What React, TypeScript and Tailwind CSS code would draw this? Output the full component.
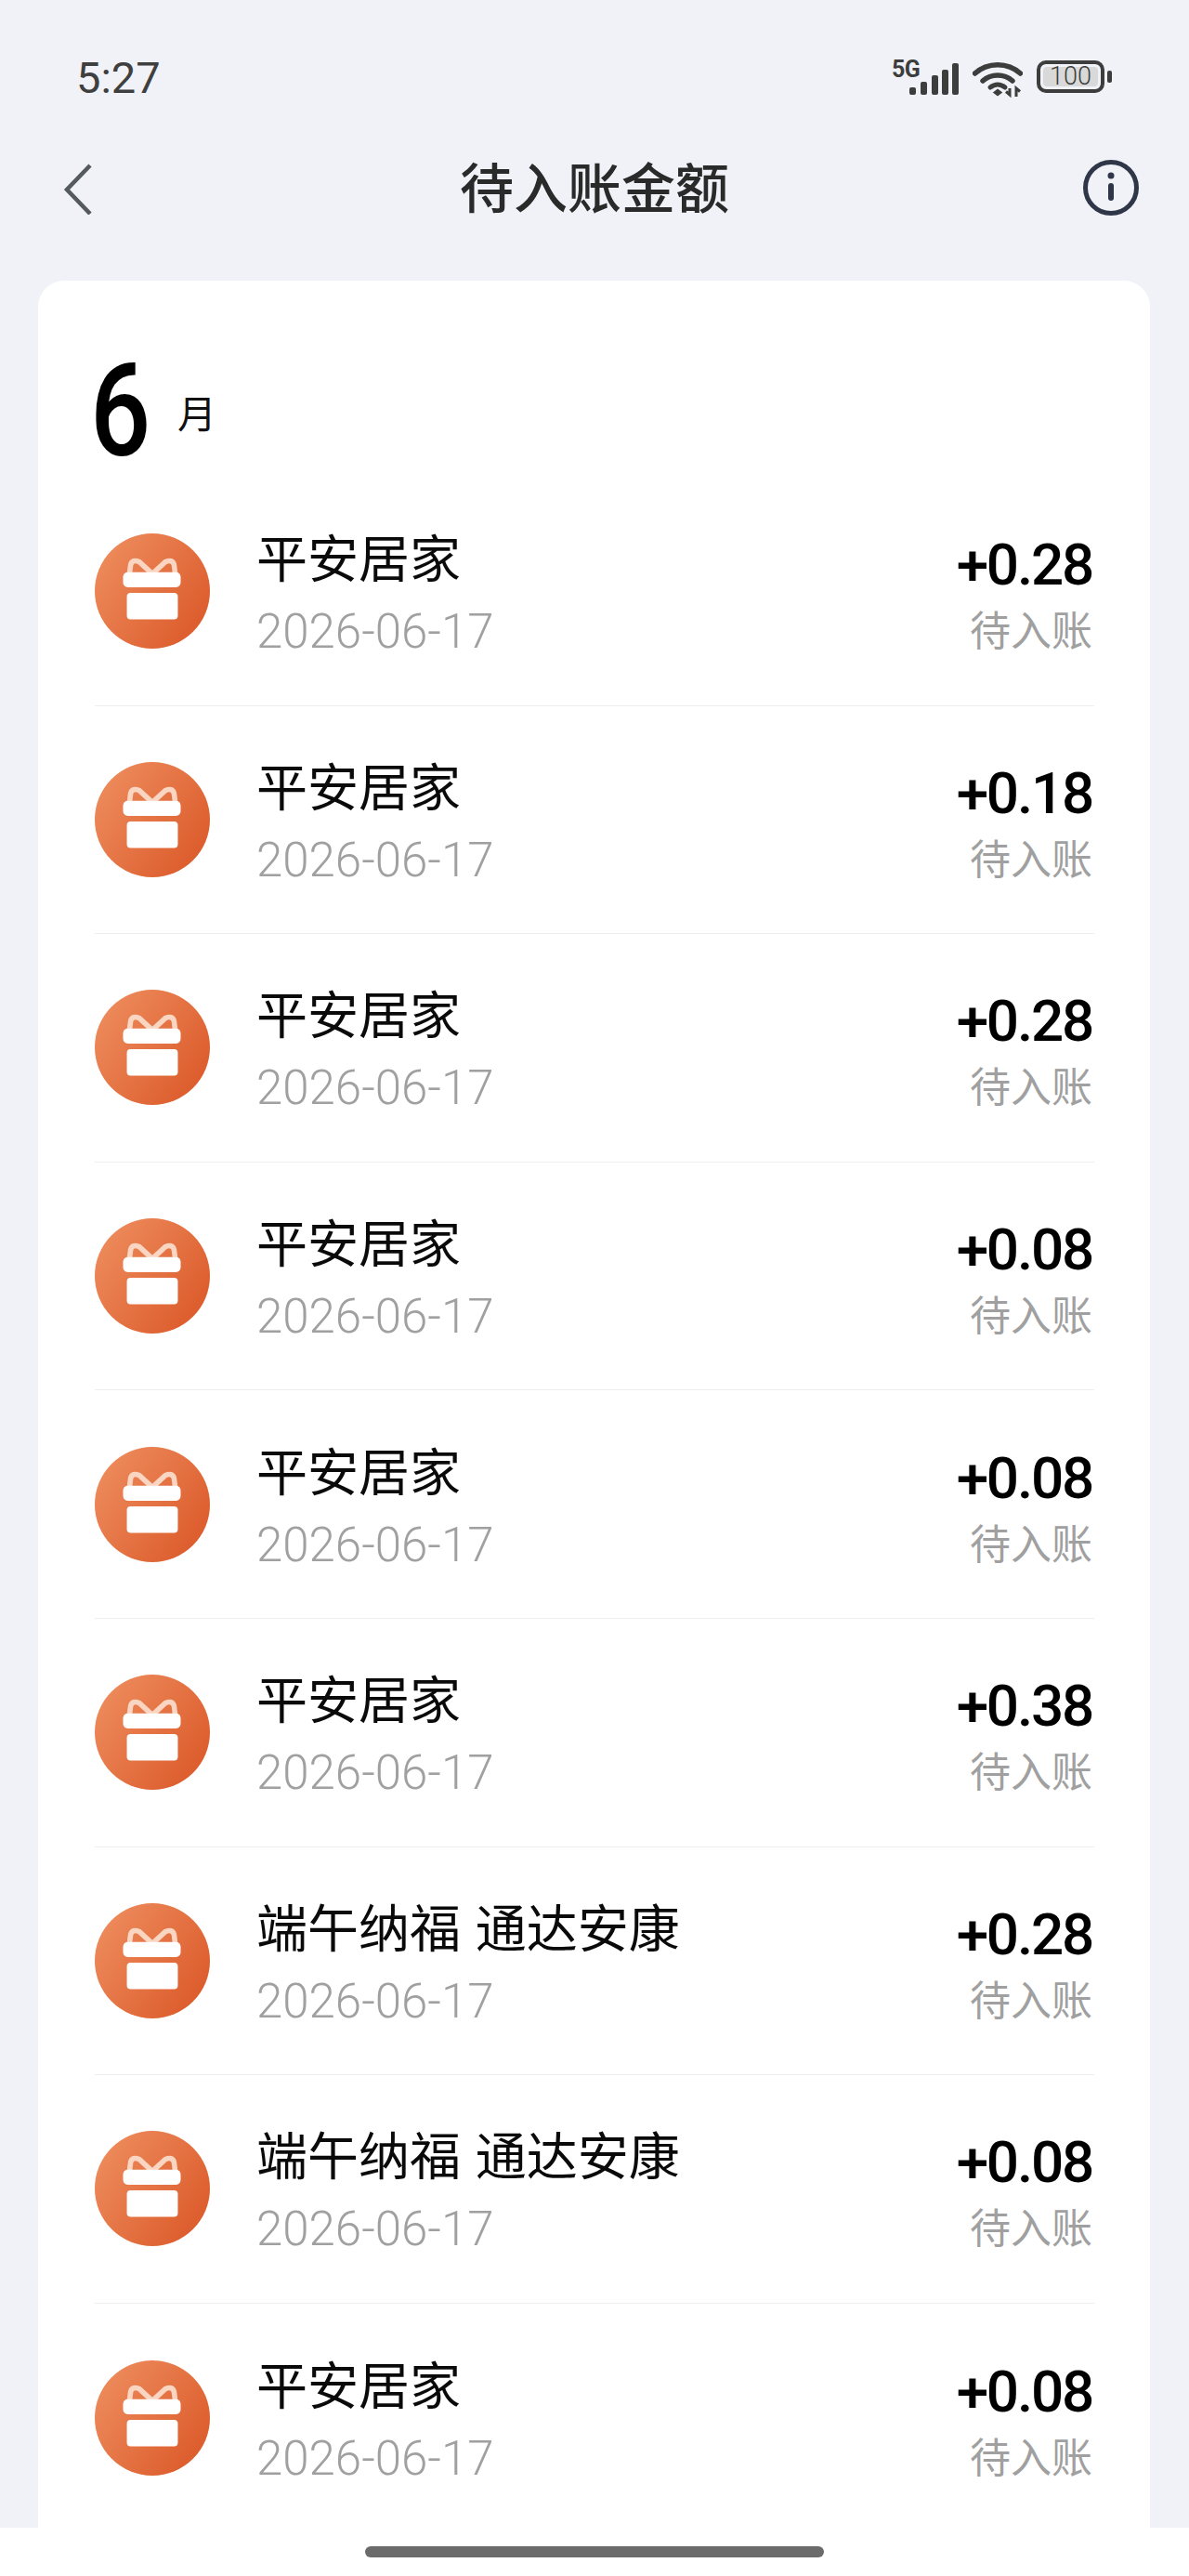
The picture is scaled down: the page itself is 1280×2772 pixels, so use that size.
import React from 'react';

const rows = [
  { title: '平安居家', amount: '+0.28' },
  { title: '平安居家', amount: '+0.18' },
  { title: '平安居家', amount: '+0.28' },
  { title: '平安居家', amount: '+0.08' },
  { title: '平安居家', amount: '+0.08' },
  { title: '平安居家', amount: '+0.38' },
  { title: '端午纳福 通达安康', amount: '+0.28' },
  { title: '端午纳福 通达安康', amount: '+0.08' },
  { title: '平安居家', amount: '+0.08' },
];

const GiftIcon = () => (
  <svg viewBox="0 0 122 122" className="w-[124px] h-[124px] shrink-0">
    <defs>
      <linearGradient id="giftBg" x1="0" y1="0.15" x2="1" y2="0.85">
        <stop offset="0" stopColor="#ee8d5e" />
        <stop offset="1" stopColor="#db5828" />
      </linearGradient>
    </defs>
    <circle cx="61" cy="61" r="61" fill="url(#giftBg)" />
    <path d="M59 41 L47 30 Q40 27 38 33 L37 41 M63 41 L75 30 Q82 27 84 33 L85 41" fill="none" stroke="#fad5c2" strokeWidth="5.5" strokeLinecap="round" />
    <rect x="30" y="41" width="61" height="16" rx="5" fill="#fff" />
    <rect x="34" y="63" width="54" height="28" rx="4" fill="#fff" />
  </svg>
);

const Signal = () => (
  <div className="relative w-[72px] h-[40px] mt-[-2px]">
    <span className="absolute left-0 top-0 text-[25px] leading-[24px] font-bold text-[#3d3d3d] tracking-[-0.5px]">5G</span>
    <svg viewBox="0 0 72 40" className="w-[72px] h-[40px]">
      <rect x="19" y="31" width="7" height="8" rx="2" fill="#3d3d3d" />
      <rect x="31" y="25" width="7" height="14" rx="2" fill="#3d3d3d" />
      <rect x="43" y="18" width="7" height="21" rx="2" fill="#3d3d3d" />
      <rect x="54" y="12" width="7" height="27" rx="2" fill="#3d3d3d" />
      <rect x="65" y="5" width="7" height="34" rx="2" fill="#3d3d3d" />
    </svg>
  </div>
);

const Wifi = () => (
  <svg viewBox="0 0 54 40" className="w-[54px] h-[40px]" fill="none" stroke="#3d3d3d" strokeLinecap="round">
    <path d="M2.5 14 C16 1.5 38 1.5 51.5 14" strokeWidth="5.5" />
    <path d="M11 22 C20 14 34 14 43 22" strokeWidth="5.5" />
    <path d="M19 29 C24 25 30 25 35 29" strokeWidth="5" />
    <path d="M23 34.5 L27 31.5 L31 34.5 L27 37.5 Z" fill="#3d3d3d" strokeWidth="1.5" />
    <path d="M40 30 V37 L36 33.5 M47 39 V30 L51 33.5" strokeWidth="3" strokeLinecap="butt" />
  </svg>
);

const App: React.FC = () => {
  return (
    <div className="w-[1280px] h-[2772px] flex flex-col bg-[#f0f2f7] overflow-hidden font-['Roboto','Noto_Sans_CJK_SC',sans-serif]">
      {/* status bar */}
      <div className="h-[168px] flex items-start justify-between pl-[82px] pr-[83px] pt-[58px] shrink-0">
        <span className="text-[47px] leading-[52px] text-[#3f3f3f]">5:27</span>
        <div className="flex items-start gap-[15px] pt-[7px]">
          <Signal />
          <Wifi />
          <div className="flex items-center gap-[3px]">
            <div className="w-[73px] h-[35px] rounded-[10px] border-[4px] border-[#3d3d3d] p-[3px] flex">
              <div className="flex-1 rounded-[4px] bg-[#d9d9d9] text-[27px] leading-[21px] text-center text-[#3d3d3d] font-light">100</div>
            </div>
            <div className="w-[5px] h-[13px] rounded-[2px] bg-[#3d3d3d]" />
          </div>
        </div>
      </div>

      {/* header */}
      <div className="h-[134px] shrink-0 flex items-start justify-between pl-[68px] pr-[53px]">
        <svg viewBox="0 0 32 56" className="w-[32px] h-[56px] mt-[7px] mr-[15px]" fill="none" stroke="#555a60" strokeWidth="4.5">
          <path d="M29 3 L4 29 L29 55" />
        </svg>
        <h1 className="text-[58px] leading-[72px] font-medium text-[#2a2a2a]">待入账金额</h1>
        <svg viewBox="0 0 62 62" className="w-[62px] h-[62px] mt-[3px]" fill="none">
          <circle cx="31" cy="31" r="27.5" stroke="#2f3648" strokeWidth="5" />
          <circle cx="31" cy="18" r="3.5" fill="#2f3648" />
          <rect x="28" y="26" width="6" height="19" rx="3" fill="#2f3648" />
        </svg>
      </div>

      {/* card */}
      <div className="flex-1 min-h-0 ml-[41px] mr-[42px] bg-white rounded-t-[28px] overflow-hidden pl-[61px] pr-[60px]">
        <div className="h-[212px] flex items-start pt-[60px]">
          <span className="text-[140px] leading-[160px] font-medium text-black scale-x-[0.82] origin-left w-[70px] ml-[-5px]">6</span>
          <span className="text-[42px] leading-[60px] text-[#111] ml-[24px] mt-[55px]">月</span>
        </div>
        {rows.map((row, i) => (
          <div key={i} className="h-[245.6px] flex items-center border-b border-[#eeeeee] last:border-b-0">
            <GiftIcon />
            <div className="ml-[50px] flex-1 flex flex-col pt-[8px]">
              <div className="text-[55px] leading-[64px] text-[#0a0a0a] [word-spacing:2px]">{row.title}</div>
              <div className="text-[51px] leading-[60px] mt-[16px] text-[#a0a0a0] font-light">2026-06-17</div>
            </div>
            <div className="flex flex-col items-end pt-[14px] mr-[2px]">
              <div className="text-[62px] leading-[64px] font-medium tracking-[-2.2px] text-black">{row.amount}</div>
              <div className="text-[44px] leading-[60px] mt-[10px] text-[#a0a0a0]">待入账</div>
            </div>
          </div>
        ))}
      </div>

      {/* home indicator */}
      <div className="h-[52px] shrink-0 bg-white flex justify-center pt-[20px]">
        <div className="w-[494px] h-[12px] rounded-full bg-[#6b6b6b]" />
      </div>
    </div>
  );
};

export default App;
